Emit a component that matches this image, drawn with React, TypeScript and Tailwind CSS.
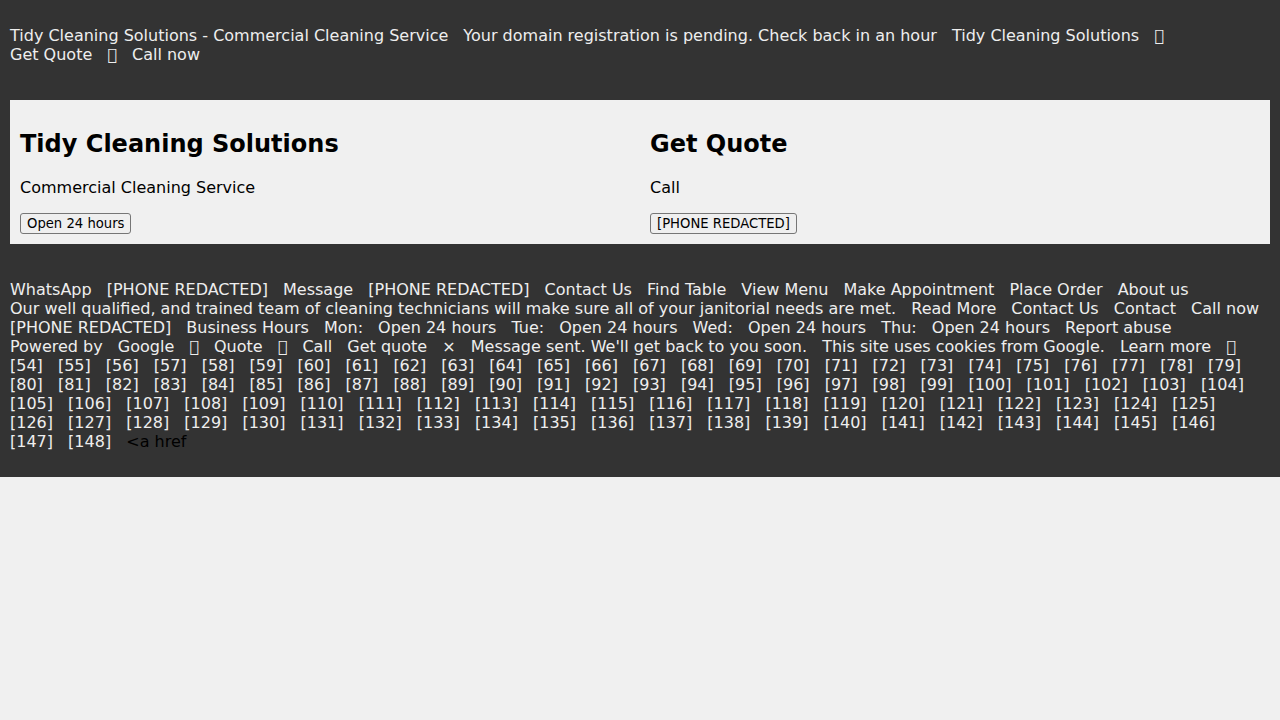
import React from 'react';

const tofu = '\uE000';

const headerTop = [
  'Tidy Cleaning Solutions - Commercial Cleaning Service',
  'Your domain registration is pending. Check back in an hour',
  'Tidy Cleaning Solutions',
  tofu,
];

const headerBottom = ['Get Quote', tofu, 'Call now'];

const footer = [
  'WhatsApp',
  '[PHONE REDACTED]',
  'Message',
  '[PHONE REDACTED]',
  'Contact Us',
  'Find Table',
  'View Menu',
  'Make Appointment',
  'Place Order',
  'About us',
  'Our well qualified, and trained team of cleaning technicians will make sure all of your janitorial needs are met.',
  'Read More',
  'Contact Us',
  'Contact',
  'Call now',
  '[PHONE REDACTED]',
  'Business Hours',
  'Mon:',
  'Open 24 hours',
  'Tue:',
  'Open 24 hours',
  'Wed:',
  'Open 24 hours',
  'Thu:',
  'Open 24 hours',
  'Report abuse',
  'Powered by',
  'Google',
  tofu,
  'Quote',
  tofu,
  'Call',
  'Get quote',
  '\u00d7',
  "Message sent. We'll get back to you soon.",
  'This site uses cookies from Google.',
  'Learn more',
  tofu,
];

for (let i = 54; i <= 148; i++) footer.push(`[${i}]`);

function Items({ items }: { items: string[] }) {
  return (
    <div className="flex flex-wrap gap-x-[15.09px] leading-[19px]">
      {items.map((t, i) => (
        <span key={i} className="whitespace-nowrap">
          {t}
        </span>
      ))}
    </div>
  );
}

function Card({ title, text, button }: { title: string; text: string; button: string }) {
  return (
    <div className="flex-1 p-[10px]">
      <h2 className="mt-[20px] text-[24px] font-bold leading-[28px]">{title}</h2>
      <p className="mt-[20px] leading-[19px]">{text}</p>
      <button className="mt-[16px] block rounded-[3px] border border-[#767676] bg-[#efefef] px-[6px] text-[13.2px] leading-[19px]">
        {button}
      </button>
    </div>
  );
}

export default function App() {
  return (
    <div className="min-h-[720px] bg-[#f0f0f0] text-[16px] font-['DejaVu_Sans',sans-serif]">
      <div className="bg-[#333333] px-[10px] pt-[26px] pb-[26px] text-[#eeeeee]">
        <Items items={headerTop} />
        <Items items={headerBottom} />

        <div className="mt-[36px] flex bg-[#f0f0f0] text-black">
          <Card title="Tidy Cleaning Solutions" text="Commercial Cleaning Service" button="Open 24 hours" />
          <Card title="Get Quote" text="Call" button="[PHONE REDACTED]" />
        </div>

        <div className="mt-[36px] flex flex-wrap gap-x-[15.09px] leading-[19px]">
          {footer.map((t, i) => (
            <span key={i} className="whitespace-nowrap">
              {t}
            </span>
          ))}
          <span className="whitespace-nowrap text-black">&lt;a href</span>
        </div>
      </div>
    </div>
  );
}
